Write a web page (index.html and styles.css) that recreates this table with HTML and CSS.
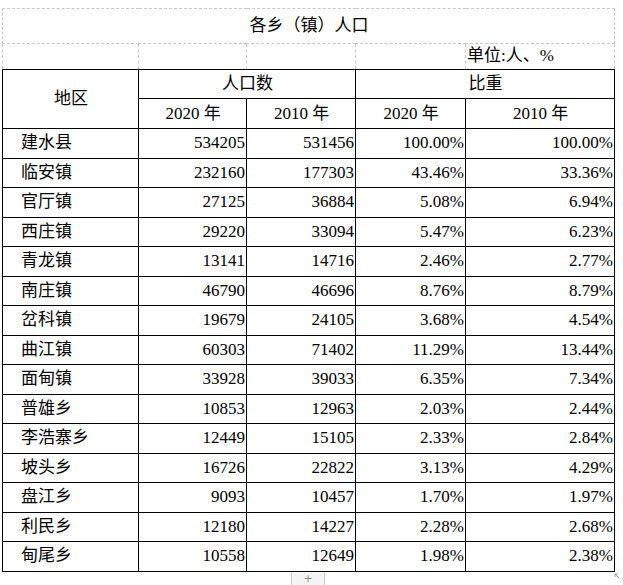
FILE: index.html
```html
<!DOCTYPE html>
<html lang="zh-CN">
<head>
<meta charset="utf-8">
<title>各乡（镇）人口</title>
<link rel="stylesheet" href="styles.css">
</head>
<body>
<div class="sheet">
  <table class="grid">
    <colgroup>
      <col class="c1"><col class="c2"><col class="c3"><col class="c4"><col class="c5">
    </colgroup>
    <tr class="title-row"><td colspan="5" class="title">各乡（镇）人口</td></tr>
    <tr class="unit-row"><td></td><td></td><td></td><td></td><td class="unit">单位:人、%</td></tr>
    <tr class="head1"><th rowspan="2">地区</th><th colspan="2">人口数</th><th colspan="2">比重</th></tr>
    <tr class="head2"><th>2020 年</th><th>2010 年</th><th>2020 年</th><th>2010 年</th></tr>
    <tr><td class="name">建水县</td><td class="num">534205</td><td class="num">531456</td><td class="num">100.00%</td><td class="num">100.00%</td></tr>
    <tr><td class="name">临安镇</td><td class="num">232160</td><td class="num">177303</td><td class="num">43.46%</td><td class="num">33.36%</td></tr>
    <tr><td class="name">官厅镇</td><td class="num">27125</td><td class="num">36884</td><td class="num">5.08%</td><td class="num">6.94%</td></tr>
    <tr><td class="name">西庄镇</td><td class="num">29220</td><td class="num">33094</td><td class="num">5.47%</td><td class="num">6.23%</td></tr>
    <tr><td class="name">青龙镇</td><td class="num">13141</td><td class="num">14716</td><td class="num">2.46%</td><td class="num">2.77%</td></tr>
    <tr><td class="name">南庄镇</td><td class="num">46790</td><td class="num">46696</td><td class="num">8.76%</td><td class="num">8.79%</td></tr>
    <tr><td class="name">岔科镇</td><td class="num">19679</td><td class="num">24105</td><td class="num">3.68%</td><td class="num">4.54%</td></tr>
    <tr><td class="name">曲江镇</td><td class="num">60303</td><td class="num">71402</td><td class="num">11.29%</td><td class="num">13.44%</td></tr>
    <tr><td class="name">面甸镇</td><td class="num">33928</td><td class="num">39033</td><td class="num">6.35%</td><td class="num">7.34%</td></tr>
    <tr><td class="name">普雄乡</td><td class="num">10853</td><td class="num">12963</td><td class="num">2.03%</td><td class="num">2.44%</td></tr>
    <tr><td class="name">李浩寨乡</td><td class="num">12449</td><td class="num">15105</td><td class="num">2.33%</td><td class="num">2.84%</td></tr>
    <tr><td class="name">坡头乡</td><td class="num">16726</td><td class="num">22822</td><td class="num">3.13%</td><td class="num">4.29%</td></tr>
    <tr><td class="name">盘江乡</td><td class="num">9093</td><td class="num">10457</td><td class="num">1.70%</td><td class="num">1.97%</td></tr>
    <tr><td class="name">利民乡</td><td class="num">12180</td><td class="num">14227</td><td class="num">2.28%</td><td class="num">2.68%</td></tr>
    <tr><td class="name">甸尾乡</td><td class="num">10558</td><td class="num">12649</td><td class="num">1.98%</td><td class="num">2.38%</td></tr>
  </table>
  <div class="footer">
    <div class="tab">+</div>
    <svg class="resize" width="6" height="6" viewBox="0 0 6 6"><path d="M1 1 L5 5 M1 1 L1 4 M1 1 L4 1" stroke="#9a9a9a" stroke-width="1" fill="none"/></svg>
  </div>
</div>
</body>
</html>
```
FILE: styles.css
```css
html, body {
  margin: 0;
  padding: 0;
  background: #ffffff;
}

.sheet {
  position: relative;
  width: 623px;
  height: 585px;
  padding: 8px 0 0 2px;
  box-sizing: border-box;
  font-family: "Liberation Serif", "Noto Sans CJK SC", serif;
  font-size: 17px;
  color: #000;
  overflow: hidden;
}

.grid {
  border-collapse: collapse;
  table-layout: fixed;
  width: 613px;
}

.c1 { width: 136px; }
.c2 { width: 108px; }
.c3 { width: 109px; }
.c4 { width: 110px; }
.c5 { width: 149px; }

.grid td,
.grid th {
  border: 1px solid #000;
  padding: 0 1px 0 2px;
  font-weight: normal;
  line-height: 20px;
  vertical-align: middle;
  white-space: nowrap;
  overflow: hidden;
}

.grid tr { height: 29.53px; }

.title-row { height: 35px !important; }
.title-row td {
  border: 1px dashed #c6c6c6;
  text-align: center;
}

.unit-row { height: 26px !important; }
.unit-row td {
  border: 1px dashed #c6c6c6;
  border-bottom: 1px solid #000;
  vertical-align: bottom;
  padding-bottom: 3px;
  padding-left: 1px;
}

.head1 { height: 29px !important; }
.head2 { height: 30px !important; }

.grid th { text-align: center; }

.name {
  text-align: left;
  padding-left: 18px !important;
}

.num { text-align: right; }

.footer {
  position: relative;
  height: 12px;
  display: flex;
  align-items: flex-start;
  padding-left: 289px;
  padding-top: 1px;
}

.tab {
  width: 32px;
  height: 12px;
  border-left: 1px solid #c8c8c8;
  border-right: 1px solid #c8c8c8;
  background: #f4f4f4;
  color: #8a8a8a;
  font-family: "DejaVu Sans", sans-serif;
  font-size: 11px;
  line-height: 12px;
  text-align: center;
}

.resize {
  position: absolute;
  right: 3px;
  top: 1px;
}
```
